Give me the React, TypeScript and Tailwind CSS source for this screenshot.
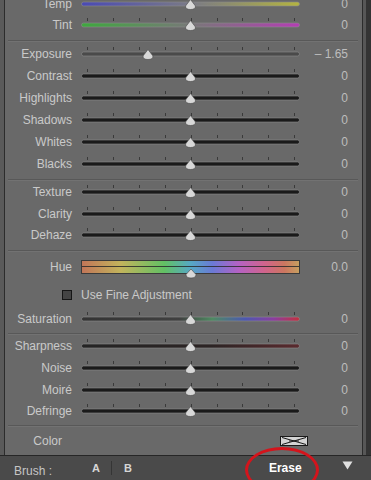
import React from "react";

const TICKS = [6, 32, 58, 84, 110, 136, 161, 187, 213];

function Track({ pos = 0.5, fill = "#1a1a1a", grad }: { pos?: number; fill?: string; grad?: React.ReactNode }) {
  const x = 0.5 + pos * 218;
  return (
    <svg width="219" height="16" viewBox="0 0 219 16" className="block">
      {grad && <defs>{grad}</defs>}
      {TICKS.map((t) => (
        <rect key={t} x={t} y={1} width={1} height={3} fill="#3a3a3a" />
      ))}
      <rect x="0.5" y="6" width="218" height="4" rx="2" fill={fill} stroke="#8c8c8c" strokeOpacity="0.6" />
      <path
        d={`M${x} 3.5 L${x + 5} 10 Q${x + 5} 13.5 ${x} 13.5 Q${x - 5} 13.5 ${x - 5} 10 Z`}
        fill="#d8d8d8"
        stroke="#444"
        strokeWidth="0.6"
      />
    </svg>
  );
}

function Row({ label, value, h, children }: { label: string; value?: string; h: string; children: React.ReactNode }) {
  return (
    <div className={`flex items-center ${h}`}>
      <div className="w-[67px] text-right text-[12px] leading-none text-[#c9c9c9]">{label}</div>
      <div className="ml-[9px] w-[219px]">{children}</div>
      <div className="w-[48px] text-right text-[12px] leading-none text-[#bdbdbd]">{value}</div>
    </div>
  );
}

function Sep({ m }: { m: string }) {
  return <div className={`${m} ml-[3px] mr-[4px] border-t border-b border-t-[#585858] border-b-[#727272]`} />;
}

function Hue() {
  const x = 110;
  return (
    <svg width="219" height="24" viewBox="0 0 219 24" className="block">
      <defs>
        <linearGradient id="g-hue" x1="0" x2="1" y1="0" y2="0">
          <stop offset="0" stopColor="#c27558" />
          <stop offset="0.18" stopColor="#c2b45c" />
          <stop offset="0.38" stopColor="#62c064" />
          <stop offset="0.5" stopColor="#56a8c4" />
          <stop offset="0.6" stopColor="#6a7ad4" />
          <stop offset="0.72" stopColor="#b462c4" />
          <stop offset="0.84" stopColor="#d0648c" />
          <stop offset="0.93" stopColor="#cc7660" />
          <stop offset="1" stopColor="#c6a060" />
        </linearGradient>
      </defs>
      <rect x="0.5" y="5.5" width="218" height="13" fill="url(#g-hue)" stroke="#3a3a3a" />
      <rect x="1" y="11" width="217" height="1" fill="#2a2a2a" opacity="0.85" />
      <path
        d={`M${x} 14 L${x + 5} 19.5 Q${x + 5} 23 ${x} 23 Q${x - 5} 23 ${x - 5} 19.5 Z`}
        fill="#d8d8d8"
        stroke="#444"
        strokeWidth="0.6"
      />
    </svg>
  );
}

export default function App() {
  return (
    <div className="relative w-[371px] h-[480px] overflow-hidden bg-[#5a5a5a] flex flex-col font-['Liberation_Sans',Arial,sans-serif]">
      <div className="flex h-[455px]">
        <div className="w-[4px] bg-[#5a5a5a]" />
        <div className="w-[359px] bg-[#696969] border-l border-r border-[#2c2c2c] overflow-hidden">
          <div className="-mt-[7px] flex flex-col">
            <Row label="Temp" value="0" h="h-[21px]">
              <Track
                fill="url(#g-temp)"
                grad={
                  <linearGradient id="g-temp" x1="0" x2="1" y1="0" y2="0">
                    <stop offset="0" stopColor="#4a4ab4" />
                    <stop offset="0.5" stopColor="#7a7a86" />
                    <stop offset="1" stopColor="#b4b440" />
                  </linearGradient>
                }
              />
            </Row>
            <Row label="Tint" value="0" h="h-[21px]">
              <Track
                fill="url(#g-tint)"
                grad={
                  <linearGradient id="g-tint" x1="0" x2="1" y1="0" y2="0">
                    <stop offset="0" stopColor="#3ea83e" />
                    <stop offset="0.5" stopColor="#787878" />
                    <stop offset="1" stopColor="#b43eb4" />
                  </linearGradient>
                }
              />
            </Row>
            <Sep m="mt-[5px] mb-[1px]" />
            <Row label="Exposure" value="– 1.65" h="h-[22px]">
              <Track pos={0.305} fill="#4a4a4a" />
            </Row>
            <Row label="Contrast" value="0" h="h-[22px]">
              <Track />
            </Row>
            <Row label="Highlights" value="0" h="h-[22px]">
              <Track />
            </Row>
            <Row label="Shadows" value="0" h="h-[22px]">
              <Track />
            </Row>
            <Row label="Whites" value="0" h="h-[22px]">
              <Track />
            </Row>
            <Row label="Blacks" value="0" h="h-[22px]">
              <Track />
            </Row>
            <Sep m="mt-[4px]" />
            <Row label="Texture" value="0" h="h-[22px]">
              <Track />
            </Row>
            <Row label="Clarity" value="0" h="h-[21px]">
              <Track />
            </Row>
            <Row label="Dehaze" value="0" h="h-[22px]">
              <Track />
            </Row>
            <Sep m="mt-[4px]" />
            <Row label="Hue" value="0.0" h="h-[30px]">
              <Hue />
            </Row>
            <div className="flex items-center h-[26px]">
              <div className="ml-[57px] w-[10px] h-[10px] bg-[#444] border border-[#161616]" />
              <span className="ml-[9px] text-[12px] leading-none text-[#c9c9c9]">Use Fine Adjustment</span>
            </div>
            <Row label="Saturation" value="0" h="h-[22px]">
              <Track
                fill="url(#g-sat)"
                grad={
                  <linearGradient id="g-sat" x1="0" x2="1" y1="0" y2="0">
                    <stop offset="0" stopColor="#333" />
                    <stop offset="0.45" stopColor="#404040" />
                    <stop offset="0.6" stopColor="#4f8a62" />
                    <stop offset="0.75" stopColor="#4c58b0" />
                    <stop offset="0.88" stopColor="#8a3ea0" />
                    <stop offset="1" stopColor="#c4303e" />
                  </linearGradient>
                }
              />
            </Row>
            <Sep m="mt-[3px]" />
            <Row label="Sharpness" value="0" h="h-[22px]">
              <Track
                fill="url(#g-sharp)"
                grad={
                  <linearGradient id="g-sharp" x1="0" x2="1" y1="0" y2="0">
                    <stop offset="0" stopColor="#242424" />
                    <stop offset="0.6" stopColor="#2c2424" />
                    <stop offset="1" stopColor="#5a2a2e" />
                  </linearGradient>
                }
              />
            </Row>
            <Row label="Noise" value="0" h="h-[22px]">
              <Track />
            </Row>
            <Row label="Moiré" value="0" h="h-[21px]">
              <Track />
            </Row>
            <Row label="Defringe" value="0" h="h-[21px]">
              <Track />
            </Row>
            <Sep m="mt-[4px]" />
            <div className="flex items-center h-[28px]">
              <div className="w-[57px] text-right text-[12px] leading-none text-[#c9c9c9]">Color</div>
              <svg width="28" height="10" viewBox="0 0 28 10" className="ml-[218px] block">
                <rect x="0.5" y="0.5" width="27" height="9" fill="#d4d4d4" stroke="#1a1a1a" />
                <path d="M2 1.5 L14 5 L26 1.5 M2 8.5 L14 5 L26 8.5 M9 5 L19 5" stroke="#1a1a1a" strokeWidth="1" fill="none" />
              </svg>
            </div>
          </div>
        </div>
        <div className="w-[3px] bg-[#575757]" />
        <div className="flex-1 bg-[#343434]" />
      </div>
      <div className="h-[1px] bg-[#262626]" />
      <div className="h-[24px] bg-[#4a4a4a] flex items-center pl-[14px]">
        <span className="w-[78px] pt-[5px] text-[12px] leading-none text-[#c6c6c6]">Brush :</span>
        <span className="text-[11px] font-bold leading-none text-[#d6d6d6]">A</span>
        <div className="ml-[11px] w-[1px] h-[14px] bg-[#353535]" />
        <span className="ml-[12px] text-[11px] font-bold leading-none text-[#d6d6d6]">B</span>
        <span className="ml-[137px] text-[12px] font-bold leading-none text-white">Erase</span>
        <svg width="11" height="9" viewBox="0 0 11 9" className="ml-auto mr-[18px] mb-[6px] block">
          <path d="M0.5 0.5 L10.5 0.5 L5.5 8.5 Z" fill="#e0e0e0" />
        </svg>
      </div>
      <div className="absolute left-[245px] top-[447px] w-[74px] h-[46px] rounded-[50%] border-[3px] border-[#d4141c]" />
    </div>
  );
}
